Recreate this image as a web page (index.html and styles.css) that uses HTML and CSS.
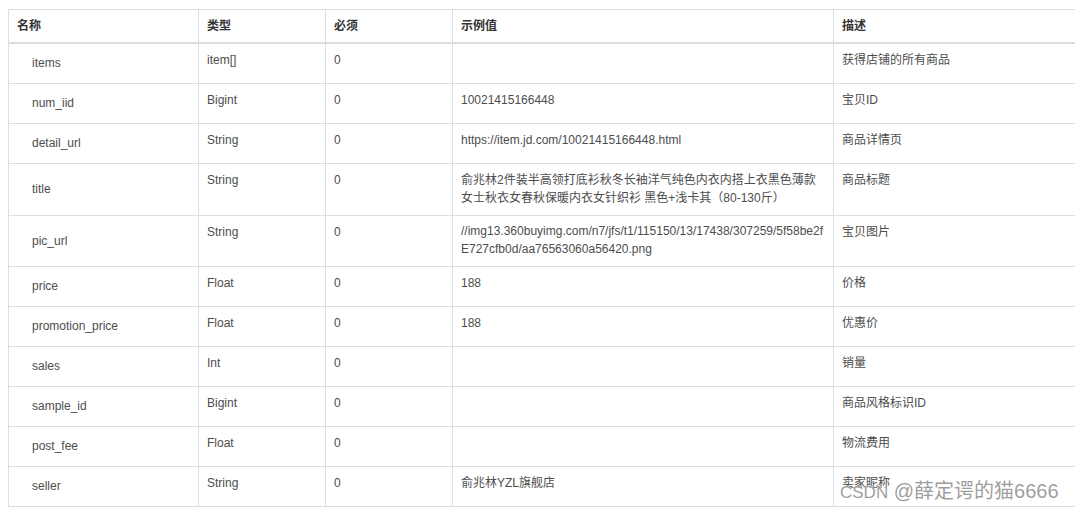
FILE: index.html
```html
<!DOCTYPE html>
<html lang="zh">
<head>
<meta charset="utf-8">
<title>API 字段</title>
<link rel="stylesheet" href="styles.css">
</head>
<body>
<div class="page">
  <table class="fields">
    <thead>
      <tr>
        <th class="c-name">名称</th>
        <th class="c-type">类型</th>
        <th class="c-req">必须</th>
        <th class="c-ex">示例值</th>
        <th class="c-desc">描述</th>
      </tr>
    </thead>
    <tbody>
      <tr><td class="name">items</td><td>item[]</td><td>0</td><td></td><td>获得店铺的所有商品</td></tr>
      <tr><td class="name">num_iid</td><td>Bigint</td><td>0</td><td>10021415166448</td><td>宝贝ID</td></tr>
      <tr><td class="name">detail_url</td><td>String</td><td>0</td><td>https://item.jd.com/10021415166448.html</td><td>商品详情页</td></tr>
      <tr><td class="name">title</td><td>String</td><td>0</td><td>俞兆林2件装半高领打底衫秋冬长袖洋气纯色内衣内搭上衣黑色薄款女士秋衣女春秋保暖内衣女针织衫 黑色+浅卡其（80-130斤）</td><td>商品标题</td></tr>
      <tr><td class="name">pic_url</td><td>String</td><td>0</td><td class="url">//img13.360buyimg.com/n7/jfs/t1/115150/13/17438/307259/5f58be2fE727cfb0d/aa76563060a56420.png</td><td>宝贝图片</td></tr>
      <tr><td class="name">price</td><td>Float</td><td>0</td><td>188</td><td>价格</td></tr>
      <tr><td class="name">promotion_price</td><td>Float</td><td>0</td><td>188</td><td>优惠价</td></tr>
      <tr><td class="name">sales</td><td>Int</td><td>0</td><td></td><td>销量</td></tr>
      <tr><td class="name">sample_id</td><td>Bigint</td><td>0</td><td></td><td>商品风格标识ID</td></tr>
      <tr><td class="name">post_fee</td><td>Float</td><td>0</td><td></td><td>物流费用</td></tr>
      <tr><td class="name">seller</td><td>String</td><td>0</td><td>俞兆林YZL旗舰店</td><td>卖家昵称</td></tr>
    </tbody>
  </table>
  <div class="watermark"><span class="wm-brand">CSDN</span> @薛定谔的猫6666</div>
</div>
</body>
</html>
```

FILE: styles.css
```css
html, body {
  margin: 0;
  padding: 0;
  background: #ffffff;
}

.page {
  position: relative;
  padding: 9px 0 0 8px;
  height: 501px;
  overflow: hidden;
  font-family: "Liberation Sans", Arial, "Noto Sans CJK SC", sans-serif;
  font-size: 12px;
  color: #4d4d4d;
}

.fields {
  border-collapse: separate;
  border-spacing: 0;
  table-layout: fixed;
  width: 1076px;
  border-top: 1px solid #dddfe4;
  border-left: 1px solid #dddfe4;
}

.fields th,
.fields td {
  box-sizing: border-box;
  border-right: 1px solid #dddfe4;
  border-bottom: 1px solid #dddfe4;
  padding: 7px 8px 8px;
  line-height: 18px;
  text-align: left;
  vertical-align: top;
}

.fields th {
  font-weight: bold;
  color: #333333;
  padding-bottom: 7px;
  border-bottom: 2px solid #dedede;
}

.fields td {
  height: 40px;
}

.c-name { width: 190px; }
.c-type { width: 127px; }
.c-req { width: 127px; }
.c-ex { width: 381px; }
.c-desc { width: 250px; }

.fields td.name {
  vertical-align: middle;
  padding-left: 23px;
}

.fields td.url {
  word-break: break-all;
  line-height: 17.5px;
}

.watermark {
  position: absolute;
  left: 840px;
  top: 479px;
  font-size: 20px;
  line-height: 24px;
  color: rgba(140, 140, 140, 0.85);
  white-space: nowrap;
  text-shadow: 0 0 1px #ffffff;
}

.wm-brand {
  font-size: 17px;
}
```
